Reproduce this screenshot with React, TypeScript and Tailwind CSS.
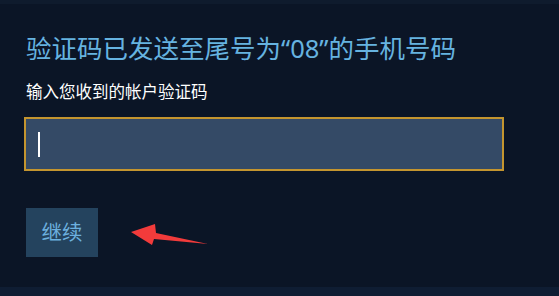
export default function App() {
  return (
    <div
      className="flex min-h-[296px] w-full flex-col bg-[#0b1526] text-white"
      style={{ fontFamily: '"Noto Sans", "Noto Sans CJK SC", sans-serif' }}
    >
      <div className="h-[4px] bg-[#0f1b2d]" />
      <main className="flex-1 px-6 pt-[26px]">
        <h1 className="pl-[2px] text-[25.5px] leading-[36px] font-normal text-[#66b3e0]">
          验证码已发送至尾号为“08”的手机号码
        </h1>
        <p className="mt-[14px] pl-[2px] text-[16.5px] leading-[24px] text-white">
          输入您收到的帐户验证码
        </p>
        <div className="mt-[13px] flex h-[54px] w-[480px] items-center border-2 border-[#c4952f] bg-[#344a66] pl-[12px]">
          <span className="h-[25px] w-[2px] bg-white" />
        </div>
        <div className="mt-[37px] flex items-center pl-[2px]">
          <button
            type="button"
            className="h-[49px] w-[72px] bg-[#24435e] text-[20.5px] text-[#6cb0df]"
          >
            继续
          </button>
          <svg width="90" height="30" viewBox="0 0 90 30" className="ml-[31px] mt-[8px]">
            <polygon
              points="2,10 26,2 27,11 79,22 25,17 23,23"
              fill="#f23b3b"
            />
          </svg>
        </div>
      </main>
      <div className="h-[9px] bg-[#0f1d33]" />
    </div>
  );
}
